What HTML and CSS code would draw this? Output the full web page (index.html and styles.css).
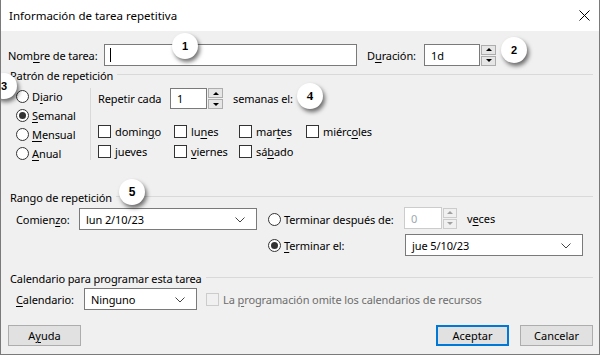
FILE: index.html
```html
<!DOCTYPE html>
<html lang="es">
<head>
<meta charset="utf-8">
<title>Información de tarea repetitiva</title>
<link rel="stylesheet" href="styles.css">
</head>
<body>
<div class="window">
  <div class="titlebar">
    <span class="title">Información de tarea repetitiva</span>
    <svg class="close" width="11" height="11" viewBox="0 0 11 11"><path d="M0.5 0.5 L10.5 10.5 M10.5 0.5 L0.5 10.5" stroke="#000" stroke-width="1" fill="none"/></svg>
  </div>
  <div class="content">
    <div class="row row-name">
      <span class="lbl lbl-name">Nom<u>b</u>re de tarea:</span>
      <div class="field field-name"><span class="caret"></span></div>
      <span class="lbl lbl-dur">D<u>u</u>ración:</span>
      <div class="field field-dur">1d</div>
      <div class="spin"><span class="sb"><i class="up"></i></span><span class="sb"><i class="down"></i></span></div>
    </div>

    <div class="group-hd"><span>Patrón de repetición</span><i class="rule"></i></div>
    <div class="pattern">
      <div class="radios">
        <div class="opt"><span class="radio"></span><span>D<u>i</u>ario</span></div>
        <div class="opt"><span class="radio on"></span><span><u>S</u>emanal</span></div>
        <div class="opt"><span class="radio"></span><span><u>M</u>ensual</span></div>
        <div class="opt"><span class="radio"></span><span><u>A</u>nual</span></div>
      </div>
      <div class="vsep"></div>
      <div class="pattern-right">
        <div class="repeat-row">
          <span class="lbl lbl-rep">Repetir cada</span>
          <div class="field field-rep">1</div>
          <div class="spin spin-rep"><span class="sb"><i class="up"></i></span><span class="sb"><i class="down"></i></span></div>
          <span class="lbl lbl-sem">semanas el:</span>
        </div>
        <div class="days">
          <div class="chk-item"><span class="chk"></span><span>domin<u>g</u>o</span></div>
          <div class="chk-item"><span class="chk"></span><span>lu<u>n</u>es</span></div>
          <div class="chk-item"><span class="chk"></span><span>mar<u>t</u>es</span></div>
          <div class="chk-item"><span class="chk"></span><span>miérc<u>o</u>les</span></div>
          <div class="chk-item"><span class="chk"></span><span><u>j</u>ueves</span></div>
          <div class="chk-item"><span class="chk"></span><span><u>v</u>iernes</span></div>
          <div class="chk-item"><span class="chk"></span><span>sá<u>b</u>ado</span></div>
        </div>
      </div>
    </div>

    <div class="group-hd hd-range"><span>Rango de repetición</span><i class="rule"></i></div>
    <div class="range">
      <span class="lbl">Comien<u>z</u>o:</span>
      <div class="field select sel-start">lun 2/10/23<svg class="chev" width="10" height="6" viewBox="0 0 10 6"><path d="M0.5 0.5 L5 5 L9.5 0.5" stroke="#444" fill="none"/></svg></div>
      <div class="opt opt-end"><span class="radio"></span><span>Terminar después de:</span></div>
      <div class="after">
        <div class="field field-times disabled">0</div>
        <div class="spin spin-times disabled"><span class="sb"><i class="up"></i></span><span class="sb"><i class="down"></i></span></div>
        <span class="lbl lbl-veces">v<u>e</u>ces</span>
      </div>
      <div class="opt opt-end opt-end2"><span class="radio on"></span><span><u>T</u>erminar el:</span></div>
      <div class="field select sel-end">jue 5/10/23<svg class="chev" width="10" height="6" viewBox="0 0 10 6"><path d="M0.5 0.5 L5 5 L9.5 0.5" stroke="#444" fill="none"/></svg></div>
    </div>

    <div class="group-hd hd-cal"><span>Calendario para programar esta tarea</span><i class="rule"></i></div>
    <div class="row row-cal">
      <span class="lbl lbl-cal"><u>C</u>alendario:</span>
      <div class="field select sel-cal">Ninguno<svg class="chev" width="10" height="6" viewBox="0 0 10 6"><path d="M0.5 0.5 L5 5 L9.5 0.5" stroke="#444" fill="none"/></svg></div>
      <div class="chk-item dis"><span class="chk"></span><span>La <u>p</u>rogramación omite los calendarios de recursos</span></div>
    </div>

    <div class="buttons">
      <button class="btn">A<u>y</u>uda</button>
      <span class="spacer"></span>
      <button class="btn primary">Aceptar</button>
      <button class="btn">Cancelar</button>
    </div>
  </div>

  <span class="callout c1">1</span>
  <span class="callout c2">2</span>
  <span class="callout c3">3</span>
  <span class="callout c4">4</span>
  <span class="callout c5">5</span>
</div>
</body>
</html>
```
FILE: styles.css
```css
* { box-sizing: border-box; }
html, body { margin: 0; padding: 0; }
body {
  font-family: "Noto Sans", "Segoe UI", sans-serif;
  font-size: 11px;
  letter-spacing: -0.1px;
  color: #000;
  background: #fff;
}
u { text-decoration: underline; text-underline-offset: 2px; }

.window {
  position: relative;
  width: 600px;
  height: 355px;
  background: #f0f0f0;
  border: 1px solid #7a7a7a;
  border-top: none;
  overflow: hidden;
}
.titlebar {
  height: 31px;
  background: #fff;
  display: flex;
  align-items: center;
  justify-content: space-between;
  padding: 0 9px 0 8px;
}
.title { font-size: 11.5px; letter-spacing: 0; }
.close { display: block; margin-top: -1px; }

.content { padding: 0 6px 0 7px; }

.row { display: flex; align-items: center; }
.lbl { white-space: nowrap; }

.field {
  background: #fff;
  border: 1px solid #7a7a7a;
  height: 22px;
  display: flex;
  align-items: center;
  padding-left: 6px;
  white-space: nowrap;
}
.row-name { margin-top: 13px; height: 22px; }
.lbl-name { width: 96px; }
.field-name { width: 253px; padding-left: 5px; }
.caret { display: block; width: 1px; height: 14px; background: #000; }
.lbl-dur { margin-left: 10px; width: 57px; }
.field-dur { width: 56px; }

.spin {
  display: flex;
  flex-direction: column;
  gap: 1px;
  width: 15px;
  height: 21px;
  margin-left: 1px;
}
.sb {
  flex: 1;
  background: #e6e6e6;
  border: 1px solid #adadad;
  display: flex;
  align-items: center;
  justify-content: center;
}
.up, .down { display: block; width: 0; height: 0; border-left: 3px solid transparent; border-right: 3px solid transparent; }
.up { border-bottom: 3px solid #000; }
.down { border-top: 3px solid #000; }
.spin.disabled .sb { background: #f0f0f0; border-color: #cccccc; }
.spin.disabled .up { border-bottom-color: #a0a0a0; }
.spin.disabled .down { border-top-color: #a0a0a0; }

.group-hd {
  display: flex;
  align-items: center;
  height: 14px;
  margin-top: 2px;
  padding-left: 2px;
}
.group-hd .rule { flex: 1; height: 1px; background: #d9d9d9; margin-left: 4px; margin-top: -1px; }

.pattern { display: flex; height: 78px; margin-top: 5px; }
.radios { width: 82px; padding-left: 8px; }
.opt { display: flex; align-items: center; height: 19px; white-space: nowrap; }
.radio {
  width: 13px;
  height: 13px;
  border: 1px solid #333;
  border-radius: 50%;
  background: #fff;
  margin-right: 3px;
  flex: none;
  display: flex;
  align-items: center;
  justify-content: center;
}
.radio.on::after { content: ""; width: 7px; height: 7px; border-radius: 50%; background: #333; }
.vsep { width: 1px; height: 72px; margin-top: 1px; background: #d9d9d9; }
.pattern-right { padding-left: 7px; }
.repeat-row { display: flex; align-items: center; height: 21px; margin-top: 1px; }
.lbl-rep { width: 72px; }
.field-rep { width: 37px; height: 21px; }
.lbl-sem { margin-left: 10px; }
.days {
  display: grid;
  grid-template-columns: 76px 65px 67px auto;
  grid-auto-rows: 20px;
  margin-top: 12px;
}
.chk-item { display: flex; align-items: center; white-space: nowrap; }
.chk {
  width: 13px;
  height: 13px;
  border: 1px solid #333;
  background: #fff;
  margin-right: 4px;
  flex: none;
}
.chk-item.dis { color: #6d6d6d; margin-left: 9px; }
.chk-item.dis .chk { border-color: #cccccc; background: #f0f0f0; }

.hd-range { margin-top: 25px; }
.range {
  display: grid;
  grid-template-columns: 63px 178px 147px auto;
  grid-template-rows: 22px 22px;
  row-gap: 4px;
  align-items: center;
  padding-left: 8px;
  margin-top: 4px;
}
.select { position: relative; padding-right: 24px; }
.chev { position: absolute; right: 11px; top: 8px; }
.sel-start { width: 178px; }
.opt-end { padding-left: 11px; height: 22px; }
.after { display: flex; align-items: center; margin-top: -2px; }
.field-times { width: 38px; height: 22px; }
.field.disabled { border-color: #cccccc; color: #a0a8b0; }
.spin-times { margin-left: 1px; width: 14px; }
.lbl-veces { margin-left: 10px; }
.opt-end2 { grid-column: 3; grid-row: 2; }
.sel-end { grid-column: 4; grid-row: 2; width: 178px; margin-left: 1px; }

.hd-cal { margin-top: 15px; }
.row-cal { margin-top: 3px; height: 22px; padding-left: 8px; }
.lbl-cal { width: 68px; }
.sel-cal { width: 113px; }

.buttons { display: flex; margin-top: 15px; }
.spacer { flex: 1; }
.btn {
  font: inherit;
  color: #000;
  width: 73px;
  height: 21px;
  padding: 0;
  background: #e1e1e1;
  border: 1px solid #adadad;
  border-radius: 0;
}
.btn.primary { border: 2px solid #0078d7; margin-right: 11px; }

.callout {
  position: absolute;
  width: 26px;
  height: 26px;
  margin: -13px 0 0 -13px;
  border-radius: 50%;
  background: #fff;
  box-shadow: 2px 3px 4px rgba(0, 0, 0, 0.55);
  display: flex;
  align-items: center;
  justify-content: center;
  font-family: "Liberation Sans", Arial, sans-serif;
  font-weight: bold;
  font-size: 11px;
  letter-spacing: 0;
  color: #000;
}
.c1 { left: 184px; top: 46px; }
.c2 { left: 513px; top: 50px; }
.c3 { left: 3px; top: 86px; }
.c4 { left: 309px; top: 96px; font-family: "Liberation Serif", "Times New Roman", serif; font-size: 13px; }
.c5 { left: 131px; top: 192px; font-size: 12px; }
```
